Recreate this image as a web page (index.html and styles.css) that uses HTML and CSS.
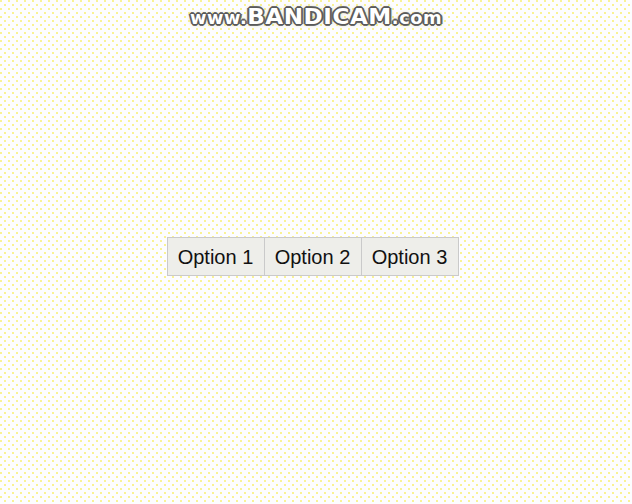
FILE: index.html
```html
<!DOCTYPE html>
<html>
<head>
<meta charset="utf-8">
<link rel="stylesheet" href="styles.css">
</head>
<body>
<div class="watermark"><span class="lc">www.</span>BANDICAM<span class="lc">.com</span></div>
<div class="group">
  <button class="opt">Option 1</button>
  <button class="opt">Option 2</button>
  <button class="opt">Option 3</button>
</div>
</body>
</html>
```
FILE: styles.css
```css
html, body {
  margin: 0;
  height: 504px;
}
body {
  box-sizing: border-box;
  display: flex;
  align-items: center;
  justify-content: center;
  padding: 9px 7px 0 0;
  background-color: #fdfdff;
  background-image:
    radial-gradient(circle at 1px 1px, #f9f292 0.7px, transparent 1px),
    radial-gradient(circle at 1px 1px, #f9f292 0.7px, transparent 1px);
  background-size: 8px 8px, 8px 8px;
  background-position: 0 0, 4px 4px;
  font-family: "Liberation Sans", Arial, sans-serif;
  position: relative;
}
.watermark {
  position: absolute;
  top: 4px;
  left: 190px;
  font-family: "DejaVu Sans", sans-serif;
  font-weight: bold;
  font-size: 22px;
  letter-spacing: 0.5px;
  color: #ffffff;
  text-shadow:
    -1px -1px 0 #5a5a5a, 1px -1px 0 #5a5a5a, -1px 1px 0 #5a5a5a, 1px 1px 0 #5a5a5a,
    -2px 0 0 #6b6b6b, 2px 0 0 #6b6b6b, 0 -2px 0 #6b6b6b, 0 2px 0 #6b6b6b,
    0 0 5px #c8c08a;
  transform: scaleX(1.05);
  transform-origin: left;
}
.watermark .lc {
  font-size: 17px;
}
.group {
  display: flex;
}
.opt {
  margin: 0;
  width: 98px;
  text-align: center;
  font-family: "Liberation Sans", Arial, sans-serif;
  font-size: 20px;
  line-height: 23px;
  color: #111;
  padding: 8px 0 6px;
  background: #eeeeea;
  border: 1px solid #cacaca;
  border-radius: 0;
  margin-left: -1px;
}
.opt:first-child {
  margin-left: 0;
}
```
